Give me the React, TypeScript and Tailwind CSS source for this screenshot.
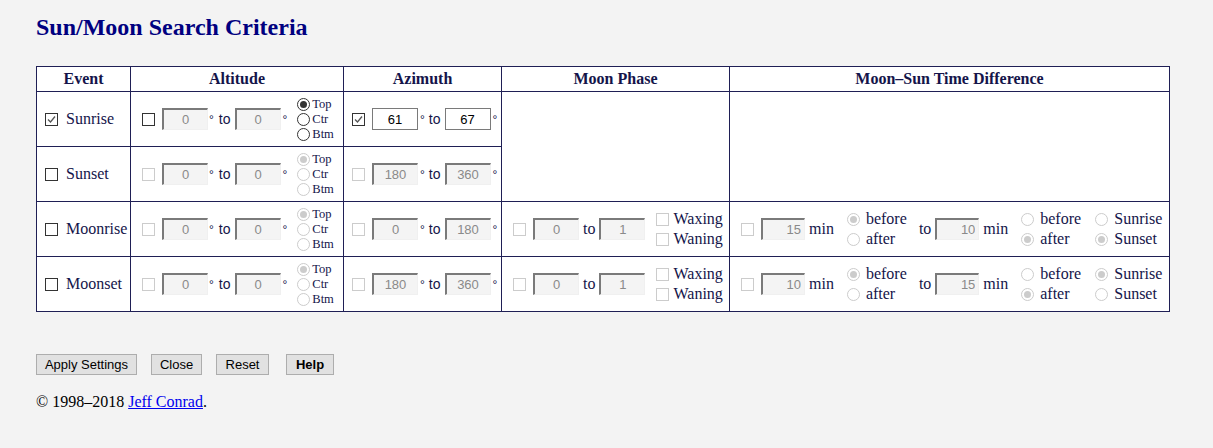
const serif = "font-['Liberation_Serif','Times_New_Roman',serif]";
const sans = "font-['Liberation_Sans',Arial,sans-serif]";

function Box({ checked = false, disabled = false }: { checked?: boolean; disabled?: boolean }) {
  return (
    <span
      className={`inline-flex h-[13px] w-[13px] shrink-0 items-center justify-center border bg-white ${
        disabled ? "border-[#cccccc]" : "border-[#333333]"
      }`}
    >
      {checked && (
        <svg width="11" height="11" viewBox="0 0 11 11">
          <polyline points="2,5.5 4.5,8 9,2.5" fill="none" stroke="#555" strokeWidth="1.3" />
        </svg>
      )}
    </span>
  );
}

function Radio({ checked = false, disabled = false }: { checked?: boolean; disabled?: boolean }) {
  return (
    <span
      className={`inline-flex h-[13px] w-[13px] shrink-0 items-center justify-center rounded-full border bg-white ${
        disabled ? "border-[#cccccc]" : "border-[#333333]"
      }`}
    >
      {checked && (
        <span className={`h-[7px] w-[7px] rounded-full ${disabled ? "bg-[#cccccc]" : "bg-[#333333]"}`} />
      )}
    </span>
  );
}

function Field({
  value,
  disabled = true,
  w = "w-[46px]",
  right = false,
}: {
  value: string;
  disabled?: boolean;
  w?: string;
  right?: boolean;
}) {
  return (
    <input
      readOnly
      disabled={disabled}
      defaultValue={value}
      className={`${w} h-[22px] shrink-0 ${sans} text-[13px] outline-none ${
        right ? "pr-[3px] text-right" : "text-center"
      } ${
        disabled
          ? "border-t-2 border-l-2 border-r border-b border-t-[#7a7a7a] border-l-[#7a7a7a] border-r-[#f0f0f0] border-b-[#f0f0f0] bg-[#f4f4f4] text-[#8a8a8a]"
          : "border border-[#7a7a7a] bg-white text-black"
      }`}
    />
  );
}

function Deg() {
  return <span className={`${sans} mb-[9px] text-[12px] leading-none`}>°</span>;
}

function Alt({ box = false, enabled = false }: { box?: boolean; enabled?: boolean }) {
  return (
    <div className="flex items-center pl-[11px]">
      <Box disabled={!box} />
      <span className="ml-[7px] flex items-center">
        <Field value="0" />
        <span className="ml-[1px]">
          <Deg />
        </span>
        <span className={`${sans} ml-[5px] text-[14px]`}>to</span>
        <span className="ml-[4px]">
          <Field value="0" />
        </span>
        <span className="ml-[2px]">
          <Deg />
        </span>
      </span>
      <div className={`ml-[10px] flex flex-col ${serif} text-[12.5px] leading-[15px]`}>
        {["Top", "Ctr", "Btm"].map((t, i) => (
          <div key={t} className="flex h-[15px] items-center">
            <Radio checked={i === 0} disabled={!enabled} />
            <span className="ml-[2px]">{t}</span>
          </div>
        ))}
      </div>
    </div>
  );
}

function Az({ from, to, enabled = false }: { from: string; to: string; enabled?: boolean }) {
  return (
    <div className="flex items-center pl-[8px]">
      <Box checked={enabled} disabled={!enabled} />
      <span className="ml-[7px]">
        <Field value={from} disabled={!enabled} />
      </span>
      <span className="ml-[2px]">
        <Deg />
      </span>
      <span className={`${sans} ml-[4px] text-[14px]`}>to</span>
      <span className="ml-[4px]">
        <Field value={to} disabled={!enabled} />
      </span>
      <span className="ml-[2px]">
        <Deg />
      </span>
    </div>
  );
}

function Phase() {
  return (
    <div className="flex items-center pl-[11px]">
      <Box disabled />
      <span className="ml-[7px]">
        <Field value="0" />
      </span>
      <span className="ml-[4px]">to</span>
      <span className="ml-[4px]">
        <Field value="1" />
      </span>
      <div className="ml-[11px] flex flex-col leading-[20px]">
        {["Waxing", "Waning"].map((t) => (
          <div key={t} className="flex h-[20px] items-center">
            <Box disabled />
            <span className="ml-[4px]">{t}</span>
          </div>
        ))}
      </div>
    </div>
  );
}

function Pair({ a, b, labels, disabled = true }: { a: boolean; b: boolean; labels: [string, string]; disabled?: boolean }) {
  return (
    <div className="flex flex-col leading-[20px]">
      <div className="flex h-[20px] items-center">
        <Radio checked={a} disabled={disabled} />
        <span className="ml-[6px]">{labels[0]}</span>
      </div>
      <div className="flex h-[20px] items-center">
        <Radio checked={b} disabled={disabled} />
        <span className="ml-[6px]">{labels[1]}</span>
      </div>
    </div>
  );
}

function Diff({ first, second, sunrise }: { first: string; second: string; sunrise: boolean }) {
  return (
    <div className="flex items-center pl-[11px]">
      <Box disabled />
      <span className="ml-[7px]">
        <Field value={first} w="w-[44px]" right />
      </span>
      <span className="ml-[4px]">min</span>
      <div className="ml-[13px] w-[72px] shrink-0">
        <Pair a b={false} labels={["before", "after"]} />
      </div>
      <span>to</span>
      <span className="ml-[4px]">
        <Field value={second} w="w-[44px]" right />
      </span>
      <span className="ml-[4px]">min</span>
      <div className="ml-[13px] w-[74px] shrink-0">
        <Pair a={false} b labels={["before", "after"]} />
      </div>
      <Pair a={sunrise} b={!sunrise} labels={["Sunrise", "Sunset"]} />
    </div>
  );
}

function EventCell({ name, checked = false }: { name: string; checked?: boolean }) {
  return (
    <div className="flex items-center gap-[8px] pl-[8px]">
      <Box checked={checked} />
      <span>{name}</span>
    </div>
  );
}

const td = "h-[55px] border border-[#1f1f55] p-0 align-middle";
const th = "h-[25px] border border-[#1f1f55] p-0 text-center font-bold";

export default function App() {
  return (
    <div className={`min-h-screen bg-[#f3f3f3] pl-[36px] pt-[13px] ${serif} text-[16px] text-[#14144a]`}>
      <h2 className="text-[24px] font-bold leading-[28px] text-[#000080]">Sun/Moon Search Criteria</h2>

      <table className="mt-[25px] w-[1134px] table-fixed border-collapse bg-white leading-[18px]">
        <colgroup>
          <col className="w-[94px]" />
          <col className="w-[213px]" />
          <col className="w-[158px]" />
          <col className="w-[228px]" />
          <col />
        </colgroup>
        <thead>
          <tr>
            <th className={th}>Event</th>
            <th className={th}>Altitude</th>
            <th className={th}>Azimuth</th>
            <th className={th}>Moon Phase</th>
            <th className={th}>Moon–Sun Time Difference</th>
          </tr>
        </thead>
        <tbody>
          <tr>
            <td className={td}>
              <EventCell name="Sunrise" checked />
            </td>
            <td className={td}>
              <Alt box enabled />
            </td>
            <td className={td}>
              <Az from="61" to="67" enabled />
            </td>
            <td className={td} rowSpan={2} />
            <td className={td} rowSpan={2} />
          </tr>
          <tr>
            <td className={td}>
              <EventCell name="Sunset" />
            </td>
            <td className={td}>
              <Alt />
            </td>
            <td className={td}>
              <Az from="180" to="360" />
            </td>
          </tr>
          <tr>
            <td className={td}>
              <EventCell name="Moonrise" />
            </td>
            <td className={td}>
              <Alt />
            </td>
            <td className={td}>
              <Az from="0" to="180" />
            </td>
            <td className={td}>
              <Phase />
            </td>
            <td className={td}>
              <Diff first="15" second="10" sunrise={false} />
            </td>
          </tr>
          <tr>
            <td className={td}>
              <EventCell name="Moonset" />
            </td>
            <td className={td}>
              <Alt />
            </td>
            <td className={td}>
              <Az from="180" to="360" />
            </td>
            <td className={td}>
              <Phase />
            </td>
            <td className={td}>
              <Diff first="10" second="15" sunrise />
            </td>
          </tr>
        </tbody>
      </table>

      <div className={`mt-[42px] flex items-center ${sans} text-[13px] text-black`}>
        <button className="h-[21px] w-[101px] border border-[#adadad] bg-[#e1e1e1]">Apply Settings</button>
        <button className="ml-[14px] h-[21px] w-[51px] border border-[#adadad] bg-[#e1e1e1]">Close</button>
        <button className="ml-[14px] h-[21px] w-[53px] border border-[#adadad] bg-[#e1e1e1]">Reset</button>
        <button className="ml-[17px] h-[21px] w-[48px] border border-[#adadad] bg-[#e1e1e1] font-bold">Help</button>
      </div>

      <p className="mt-[18px] leading-[18px] text-black">
        © 1998–2018{" "}
        <a href="#" className="text-[#0000ee] underline">
          Jeff Conrad
        </a>
        .
      </p>
    </div>
  );
}
